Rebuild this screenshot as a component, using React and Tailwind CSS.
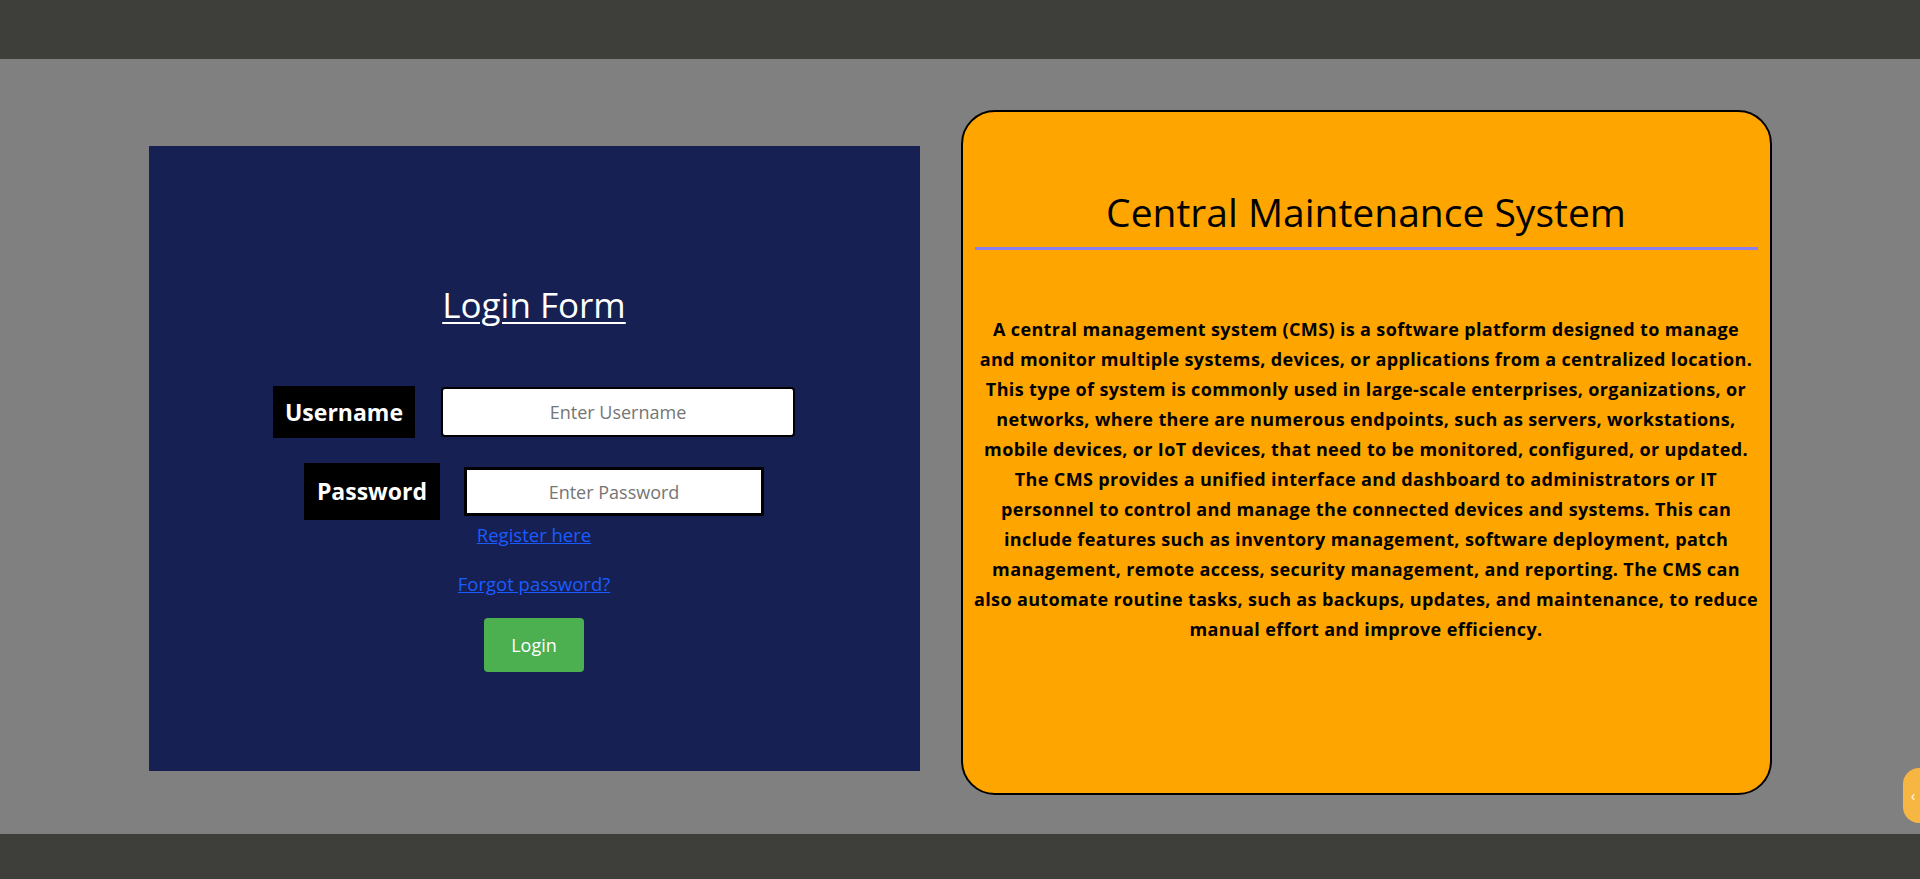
import React from "react";

export default function App() {
  return (
    <div className="relative flex h-[879px] w-full flex-col bg-[#808080] font-['Open_Sans',sans-serif]">
      <header className="h-[59px] w-full shrink-0 bg-[#3e3f3a]" />

      <main className="flex flex-1 items-center justify-center gap-[41px] pt-[12px]">
        {/* login panel */}
        <section className="mt-[12px] flex h-[625px] w-[771px] flex-col items-center bg-[#172052] pt-[139px]">
          <h2 className="text-[35px] leading-[40px] text-white underline decoration-2 underline-offset-4">
            Login Form
          </h2>

          <div className="mt-[61px] flex items-center gap-[26px]">
            <label className="flex h-[52px] w-[142px] items-center justify-center bg-black text-[23px] font-bold text-white">
              Username
            </label>
            <input
              type="text"
              placeholder="Enter Username"
              className="h-[50px] w-[354px] rounded-[4px] border-2 border-black bg-white text-center text-[18px] text-black placeholder:text-[#757575]"
            />
          </div>

          <div className="mt-[25px] flex items-center gap-[24px]">
            <label className="flex h-[57px] w-[136px] items-center justify-center bg-black text-[23px] font-bold text-white">
              Password
            </label>
            <input
              type="password"
              placeholder="Enter Password"
              className="h-[49px] w-[300px] border-[3px] border-black bg-white text-center text-[18px] text-black placeholder:text-[#757575]"
            />
          </div>

          <a href="#" className="mt-[3px] text-[18.5px] leading-[24px] text-[#1a5cff] underline">
            Register here
          </a>
          <a href="#" className="mt-[25px] text-[18.5px] leading-[24px] text-[#1a5cff] underline">
            Forgot password?
          </a>

          <button className="mt-[22px] h-[54px] w-[100px] rounded-[4px] bg-[#4caf50] text-[18px] text-white">
            Login
          </button>
        </section>

        {/* info panel */}
        <section className="flex h-[685px] w-[811px] flex-col rounded-[34px] border-2 border-black bg-[#ffa500] px-[12px] pt-[76px]">
          <h1 className="text-center text-[39px] leading-[48px] text-black">
            Central Maintenance System
          </h1>
          <hr className="mt-[11px] border-t-[3px] border-[#8a7ff0]" />
          <p className="mt-[64px] w-[792px] self-center text-center text-[18px] font-bold leading-[30px] tracking-[0.36px] text-black">
            A central management system (CMS) is a software platform designed to manage{" "}
            <span className="whitespace-nowrap">and monitor</span> multiple systems, devices, or
            applications from a centralized location. This type of system is commonly used in
            large-scale enterprises, organizations, or networks, where there are numerous
            endpoints, such as servers, workstations, mobile devices, or IoT devices, that need to
            be monitored, configured, or updated. The CMS provides a unified interface and dashboard
            to administrators or IT personnel to control and manage the connected devices and
            systems. This can include features such as inventory management, software deployment,
            patch management, remote access, security management, and reporting. The CMS can{" "}
            <span className="whitespace-nowrap">also automate</span> routine tasks, such as
            backups, updates, and maintenance, to reduce manual effort and improve efficiency.
          </p>
        </section>
      </main>

      <footer className="h-[45px] w-full shrink-0 bg-[#3e3f3a]" />

      <div className="absolute right-0 top-[768px] flex h-[55px] w-[17px] items-center justify-center rounded-l-[16px] bg-[#f7b541] pl-[3px] text-[14px] text-white">
        ‹
      </div>
    </div>
  );
}
